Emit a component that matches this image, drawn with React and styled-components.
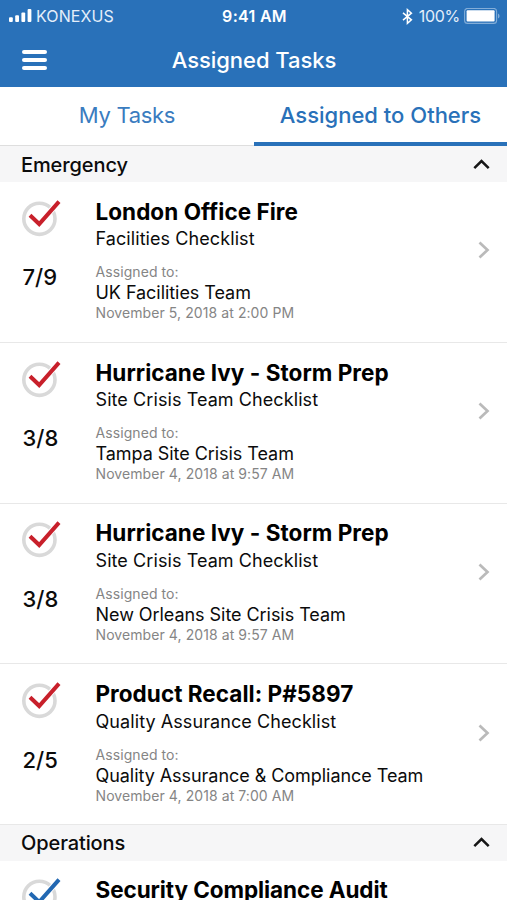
import React from "react";
import styled, { createGlobalStyle } from "styled-components";

const BLUE = "#2971b9";

const GlobalStyle = createGlobalStyle`
  * { box-sizing: border-box; }
  body { margin: 0; background: #fff; }
`;

const Screen = styled.main`
  width: 507px;
  height: 900px;
  overflow: hidden;
  background: #fff;
  color: #0b0b0b;
  font-family: Inter, "Liberation Sans", sans-serif;
`;

const Header = styled.header`
  height: 87px;
  background: ${BLUE};
  color: #fff;
`;

const StatusBar = styled.div`
  display: grid;
  grid-template-columns: 1fr auto 1fr;
  align-items: center;
  height: 32px;
  padding: 0 7px 0 9px;
  font-size: 16px;
  line-height: 20px;
`;

const Carrier = styled.div`
  display: flex;
  align-items: center;
  gap: 4px;
  letter-spacing: 0.1px;
  color: #e4eefa;
`;

const Clock = styled.div`
  font-weight: 600;
  letter-spacing: 0.3px;
`;

const DeviceState = styled.div`
  display: flex;
  align-items: center;
  justify-content: flex-end;
  letter-spacing: -0.3px;
  color: #e4eefa;
`;

const Percent = styled.span`
  margin: 0 4px 0 6px;
`;

const NavBar = styled.div`
  display: grid;
  grid-template-columns: 48px 1fr 48px;
  align-items: center;
  height: 55px;
  padding: 1px 21px 0 22px;
`;

const MenuButton = styled.button`
  display: flex;
  flex-direction: column;
  gap: 3.5px;
  width: 25px;
  padding: 0;
  border: 0;
  background: none;
`;

const MenuBar = styled.span`
  height: 4.2px;
  border-radius: 2px;
  background: #fff;
`;

const Title = styled.h1`
  margin: 0;
  text-align: center;
  font-size: 22px;
  font-weight: 500;
  line-height: 28px;
  letter-spacing: -0.05px;
`;

const Tabs = styled.nav`
  display: grid;
  grid-template-columns: 254px 253px;
  height: 59px;
`;

const Tab = styled.button`
  padding: 0 0 ${(p) => (p.$active ? 0 : 3)}px;
  border: 0;
  border-bottom: ${(p) => (p.$active ? `4px solid ${BLUE}` : "1px solid #dedede")};
  background: #fff;
  color: #3a7cbf;
  font: inherit;
  font-size: 22px;
  font-weight: 400;
  line-height: 28px;
  letter-spacing: -0.3px;
  ${(p) => p.$active && `color: ${BLUE}; font-weight: 500; letter-spacing: 0;`}
`;

const SectionHeader = styled.h2`
  display: flex;
  align-items: center;
  justify-content: space-between;
  height: ${(p) => (p.$first ? 36 : 35.5)}px;
  margin: 0;
  padding: 1px 17px 0 21px;
  background: #f6f6f7;
  font-size: 20px;
  font-weight: 500;
  line-height: 24px;
  letter-spacing: -0.1px;
`;

const Task = styled.article`
  display: grid;
  grid-template-columns: 95.5px 1fr auto;
  height: 160.75px;
  padding: 15.4px 17px 0 0;
  border-bottom: 1px solid #e8e8e8;
`;

const Progress = styled.div`
  display: flex;
  flex-direction: column;
  gap: 25.4px;
  padding: 0.6px 0 0 21px;
`;

const Count = styled.span`
  padding-left: 1.5px;
  font-size: 22px;
  font-weight: 500;
  line-height: 28px;
`;

const TaskBody = styled.div`
  padding-top: 0.6px;
  white-space: nowrap;
`;

const TaskTitle = styled.h3`
  margin: 0;
  font-size: 22.5px;
  font-weight: 700;
  line-height: 28px;
  letter-spacing: ${(p) => p.$tracking}px;
  color: #000;
`;

const Checklist = styled.p`
  margin: 2.4px 0 13px;
  font-size: 18px;
  line-height: 22px;
  letter-spacing: 0.08px;
`;

const Meta = styled.p`
  margin: 0;
  font-size: 14px;
  line-height: 18px;
  letter-spacing: 0.08px;
  color: #858585;
`;

const Assignee = styled.p`
  margin: 1px 0 0;
  font-size: 18px;
  line-height: 22px;
  letter-spacing: -0.05px;
`;

const ArrowSlot = styled.div`
  height: 106.2px;
  display: flex;
  align-items: center;
`;

const Signal = () => (
  <svg width="23" height="15" viewBox="0 0 23 15" fill="#fff">
    <rect x="0" y="8.3" width="3.8" height="4.7" rx="1" />
    <rect x="6.2" y="6.2" width="3.8" height="6.8" rx="1" />
    <rect x="12.4" y="3.5" width="3.8" height="9.5" rx="1" />
    <rect x="18.6" y="0" width="3.8" height="13" rx="1" />
  </svg>
);

const Bluetooth = () => (
  <svg width="11" height="17" viewBox="0 0 11 17" fill="none" stroke="#fff" strokeWidth="1.5">
    <path d="M1 4.8 9.4 11.8 5.4 15.3V1.7L9.4 5.2 1 12.2" />
  </svg>
);

const Battery = () => (
  <svg width="36" height="17" viewBox="0 0 36 17">
    <rect x="0.6" y="0.4" width="32" height="15" rx="3" fill="none" stroke="#82add8" strokeWidth="1.1" />
    <rect x="2.6" y="2.3" width="28" height="11.2" rx="1" fill="#fff" />
    <path d="M34 5.5q1.6.8 1.6 2.5T34 10.5z" fill="#82add8" />
  </svg>
);

const StatusCheck = ({ color }) => (
  <svg width="41" height="40" viewBox="0 0 41 40" fill="none">
    <circle cx="18.4" cy="20.8" r="15.6" stroke="#d9d9d9" strokeWidth="3.6" />
    <path d="M9 17.2 18.2 26 38 3.6" stroke="#fff" strokeWidth="6" />
    <path d="M9 17.2 18.2 26 38 3.6" stroke={color} strokeWidth="4" />
  </svg>
);

const ChevronUp = () => (
  <svg width="17" height="12" viewBox="0 0 17 12" fill="none" stroke="#161616" strokeWidth="2.5">
    <path d="M1.3 9.2 8.5 2 15.7 9.2" />
  </svg>
);

const ChevronRight = () => (
  <svg width="13" height="18" viewBox="0 0 13 18" fill="none" stroke="#bababa" strokeWidth="2.7">
    <path d="M2.5 1.5 10.5 9 2.5 16.5" />
  </svg>
);

const groups = [
  {
    name: "Emergency",
    color: "#c8202b",
    tasks: [
      ["London Office Fire", "Facilities Checklist", "7/9", "UK Facilities Team", "November 5, 2018 at 2:00 PM"],
      ["Hurricane Ivy - Storm Prep", "Site Crisis Team Checklist", "3/8", "Tampa Site Crisis Team", "November 4, 2018 at 9:57 AM"],
      ["Hurricane Ivy - Storm Prep", "Site Crisis Team Checklist", "3/8", "New Orleans Site Crisis Team", "November 4, 2018 at 9:57 AM"],
      ["Product Recall: P#5897", "Quality Assurance Checklist", "2/5", "Quality Assurance & Compliance Team", "November 4, 2018 at 7:00 AM"],
    ],
  },
  {
    name: "Operations",
    color: "#2268b2",
    tracking: -0.08,
    tasks: [["Security Compliance Audit"]],
  },
];

function TaskItem({ task, color, tracking = 0.04 }) {
  const [title, checklist, count, assignee, date] = task;
  return (
    <Task>
      <Progress>
        <StatusCheck color={color} />
        {count && <Count>{count}</Count>}
      </Progress>
      <TaskBody>
        <TaskTitle $tracking={tracking}>{title}</TaskTitle>
        {checklist && (
          <>
            <Checklist>{checklist}</Checklist>
            <Meta>Assigned to:</Meta>
            <Assignee>{assignee}</Assignee>
            <Meta>{date}</Meta>
          </>
        )}
      </TaskBody>
      <ArrowSlot>
        <ChevronRight />
      </ArrowSlot>
    </Task>
  );
}

export default function App() {
  return (
    <Screen>
      <GlobalStyle />
      <Header>
        <StatusBar>
          <Carrier>
            <Signal />
            KONEXUS
          </Carrier>
          <Clock>9:41 AM</Clock>
          <DeviceState>
            <Bluetooth />
            <Percent>100%</Percent>
            <Battery />
          </DeviceState>
        </StatusBar>
        <NavBar>
          <MenuButton aria-label="Menu">
            <MenuBar />
            <MenuBar />
            <MenuBar />
          </MenuButton>
          <Title>Assigned Tasks</Title>
        </NavBar>
      </Header>
      <Tabs>
        <Tab>My Tasks</Tab>
        <Tab $active>Assigned to Others</Tab>
      </Tabs>
      {groups.map((group, i) => (
        <section key={group.name}>
          <SectionHeader $first={i === 0}>
            {group.name}
            <ChevronUp />
          </SectionHeader>
          {group.tasks.map((task, j) => (
            <TaskItem key={j} task={task} color={group.color} tracking={group.tracking} />
          ))}
        </section>
      ))}
    </Screen>
  );
}
